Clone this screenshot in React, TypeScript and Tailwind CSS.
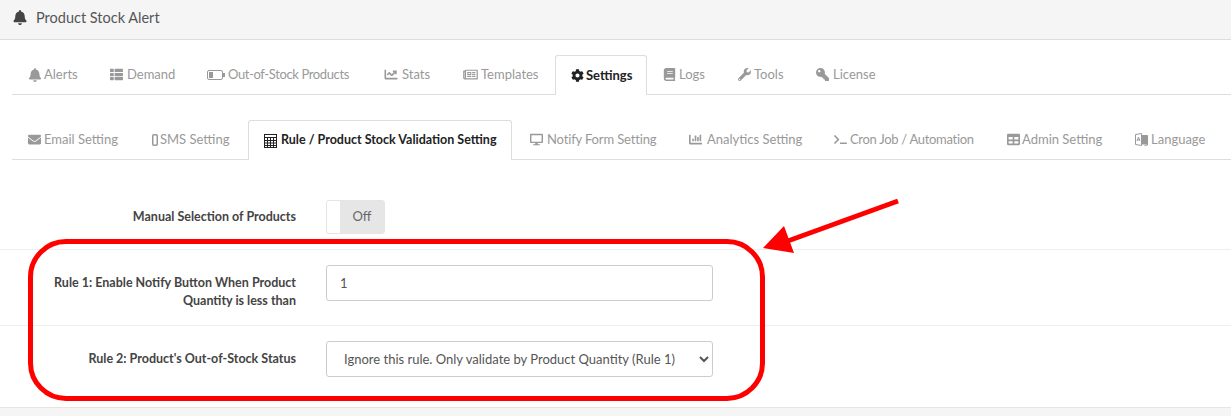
import type { ReactNode } from 'react';
import {
  FaBell,
  FaThList,
  FaChartLine,
  FaRegNewspaper,
  FaCog,
  FaBook,
  FaWrench,
  FaKey,
  FaEnvelope,
  FaDesktop,
  FaChartBar,
  FaTerminal,
  FaTable,
} from 'react-icons/fa';

type TabItem = { label: string; icon: ReactNode; active?: boolean; width: string; iconBox: string; textSize?: string };

function BatteryIcon() {
  return (
    <svg width="18" height="10" viewBox="0 0 18 10" fill="none">
      <rect x="0.5" y="0.5" width="15" height="9" rx="1.5" stroke="currentColor" />
      <rect x="2" y="2" width="4" height="6" fill="currentColor" />
      <rect x="16" y="3" width="2" height="4" fill="currentColor" />
    </svg>
  );
}

function PhoneIcon() {
  return (
    <svg width="6" height="12" viewBox="0 0 6 12" fill="none">
      <rect x="0.75" y="0.75" width="4.5" height="10.5" rx="1" stroke="currentColor" strokeWidth="1.5" />
    </svg>
  );
}

function CalcIcon() {
  return (
    <svg width="13" height="14" viewBox="0 0 13 14" fill="none" stroke="currentColor">
      <rect x="0.5" y="0.5" width="12" height="13" />
      <path d="M1 3.5h11M1 6.5h11M1 9h11M1 11.5h11M3.5 4v9M6.5 4v9M9.5 4v9" />
    </svg>
  );
}

function LanguageIcon() {
  return (
    <svg width="13" height="13" viewBox="0 0 13 13" fill="none" stroke="currentColor">
      <path d="M0.5 1.5l6 -1v12l-6 -1z" />
      <path d="M6.5 2.5h6v9.5l-3 .5" />
      <path d="M2 8l1.5 -4 1.5 4M2.5 6.8h2" />
      <rect x="7" y="3" width="5" height="8" fill="currentColor" />
    </svg>
  );
}

const mainTabs: TabItem[] = [
  { label: 'Alerts', icon: <FaBell className="w-[14px] h-[14px]" />, width: 'w-[82px]', iconBox: 'w-[16px]' },
  { label: 'Demand', icon: <FaThList />, width: 'w-[97px]', iconBox: 'w-[17px]' },
  { label: 'Out-of-Stock Products', icon: <BatteryIcon />, width: 'w-[176px]', iconBox: 'w-[21px]', textSize: 'tracking-[-0.38px]' },
  { label: 'Stats', icon: <FaChartLine className="w-[16px] h-[13px]" />, width: 'w-[80px]', iconBox: 'w-[19px]' },
  { label: 'Templates', icon: <FaRegNewspaper className="w-[15px] h-[13px]" />, width: 'w-[108px]', iconBox: 'w-[18px]' },
  { label: 'Settings', icon: <FaCog />, active: true, width: 'w-[92px]', iconBox: 'w-[15px]' },
  { label: 'Logs', icon: <FaBook />, width: 'w-[75px]', iconBox: 'w-[16px]' },
  { label: 'Tools', icon: <FaWrench />, width: 'w-[78px]', iconBox: 'w-[16px]' },
  { label: 'License', icon: <FaKey className="-scale-x-100" />, width: 'w-[90px]', iconBox: 'w-[17px]' },
];

const settingTabs: TabItem[] = [
  { label: 'Email Setting', icon: <FaEnvelope />, width: 'w-[124px]', iconBox: 'w-[16px]' },
  { label: 'SMS Setting', icon: <PhoneIcon />, width: 'w-[112px]', iconBox: 'w-[8px]' },
  { label: 'Rule / Product Stock Validation Setting', icon: <CalcIcon />, active: true, width: 'w-[264px]', iconBox: 'w-[17px]', textSize: 'text-[12.5px]' },
  { label: 'Notify Form Setting', icon: <FaDesktop className="ml-0.5" />, width: 'w-[161px]', iconBox: 'w-[19px]', textSize: 'tracking-[-0.15px]' },
  { label: 'Analytics Setting', icon: <FaChartBar />, width: 'w-[145px]', iconBox: 'w-[18px]' },
  { label: 'Cron Job / Automation', icon: <FaTerminal />, width: 'w-[173px]', iconBox: 'w-[16px]', textSize: 'tracking-[-0.3px]' },
  { label: 'Admin Setting', icon: <FaTable />, width: 'w-[128px]', iconBox: 'w-[15px]' },
  { label: 'Language', icon: <LanguageIcon />, width: 'w-[112px]', iconBox: 'w-[16px]' },
];

function TabRow({ tabs }: { tabs: TabItem[] }) {
  return (
    <div className="flex h-10 border-b border-[#dddddd] ml-3">
      {tabs.map(tab => (
        <div
          key={tab.label}
          className={
            tab.active
              ? `${tab.width} ${tab.textSize ?? ''} h-10 shrink-0 flex items-center pl-[15px] whitespace-nowrap bg-white border border-b-0 border-[#dddddd] rounded-t-[3px] font-bold text-[#222222]`
              : `${tab.width} ${tab.textSize ?? ''} h-[39px] shrink-0 flex items-center pl-4 whitespace-nowrap text-[#999999]`
          }
        >
          <span className={`${tab.iconBox} shrink-0 flex items-center text-[13px]`}>{tab.icon}</span>
          {tab.label}
        </div>
      ))}
    </div>
  );
}

function Label({ children }: { children: ReactNode }) {
  return <div className="w-[296px] shrink-0 text-right font-bold text-[12.5px] text-[#444444] leading-[18px] pl-12">{children}</div>;
}

export default function App() {
  return (
    <div className="relative w-[1231px] h-[416px] overflow-hidden bg-white text-[13px] font-['Lato',sans-serif]">
      <div className="h-10 flex items-center pb-1 pl-[13px] bg-[#f5f5f5] border-b border-[#dddddd] text-[#555555] text-[14.5px]">
        <FaBell className="w-[14px] h-[15px] mr-[9px] text-[#444444]" />
        Product Stock Alert
      </div>

      <div className="pt-[15px]">
        <TabRow tabs={mainTabs} />
      </div>
      <div className="pt-[25px]">
        <TabRow tabs={settingTabs} />
      </div>

      <div className="mt-[30px]">
        <div className="h-[60px] pt-[10px] flex items-start border-b border-[#eeeeee]">
          <div className="h-[34px] flex items-center">
            <Label>Manual Selection of Products</Label>
          </div>
          <div className="ml-[30px] w-[59px] h-[34px] flex border border-[#e5e5e5] rounded-[3px]">
            <div className="w-[13px] bg-white rounded-l-[3px]" />
            <div className="flex-1 bg-[#e6e6e6] text-[#666666] flex items-center justify-center">Off</div>
          </div>
        </div>

        <div className="h-[76px] pt-[15px] flex items-start border-b border-[#eeeeee]">
          <div className="pt-[9px]">
            <Label>Rule 1: Enable Notify Button When Product Quantity is less than</Label>
          </div>
          <input
            readOnly
            value="1"
            className="ml-[30px] w-[387px] h-9 px-[13px] border border-[#cccccc] rounded-[3px] text-[#555555] outline-none"
          />
        </div>

        <div className="h-[82px] pt-[15px] flex items-start border-b border-[#e5e5e5]">
          <div className="h-9 flex items-center">
            <Label>Rule 2: Product's Out-of-Stock Status</Label>
          </div>
          <select className="ml-[30px] w-[387px] h-9 px-[13px] border border-[#cccccc] rounded-[3px] bg-white text-[#555555] outline-none">
            <option>Ignore this rule. Only validate by Product Quantity (Rule 1)</option>
          </select>
        </div>
      </div>
      <div className="h-3 bg-[#f5f5f5]" />

      {/* red annotation drawn over the page */}
      <div className="absolute left-[28px] top-[239px] w-[737px] h-[162px] border-[5px] border-[#ff0000] rounded-[38px] pointer-events-none" />
      <svg className="absolute left-0 top-0 pointer-events-none" width="1231" height="416">
        <line x1="898" y1="201" x2="785" y2="242" stroke="#ff0000" strokeWidth="5" />
        <polygon points="763,248 784,226 794,253" fill="#ff0000" />
      </svg>
    </div>
  );
}
